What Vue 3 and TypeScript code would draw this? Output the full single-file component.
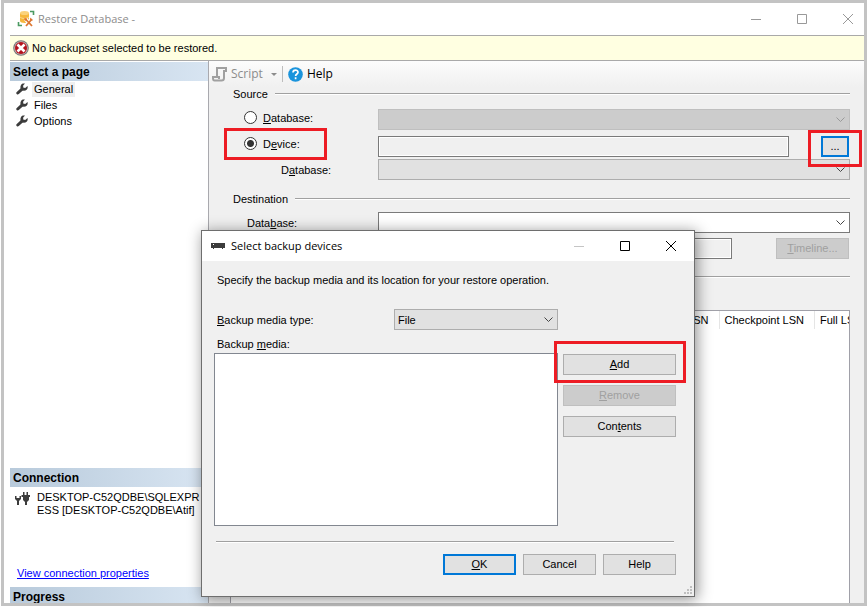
<script setup lang="ts">
import { ref } from 'vue'

interface Page { name: string; href: string }
const pages: Page[] = [
  { name: 'General', href: '#general' },
  { name: 'Files', href: '#files' },
  { name: 'Options', href: '#options' },
]
const current = ref('General')
const source = ref('device')
const mediaType = ref('File')
const columns: string[] = ['LSN', 'Checkpoint LSN', 'Full LSN']
</script>

<template>
  <div class="screen">
    <main class="window">
      <header class="titlebar">
        <svg class="app-icon" viewBox="0 0 18 18" width="18" height="18" aria-hidden="true">
          <path d="M3 3v8c0 2.500 9 2.500 9 0V3z" fill="#f6b73c" />
          <ellipse cx="7.500" cy="3" rx="4.500" ry="2" fill="#fbd27a" />
          <path d="M3 7c2 2 7 2 9 0" fill="none" stroke="#fbd98f" />
          <path d="M13 1.500h3.500V5M1.500 12v3.500H5" fill="none" stroke="#4b9a62" stroke-width="1.600" />
          <path d="M8.500 9l6.500 7M15 9l-6 7" stroke="#fff" stroke-width="4" />
          <path d="M8.500 9l6.500 7M15 9l-6 7" stroke="#dd7630" stroke-width="1.800" />
          <path d="M7 8.500L9.500 8l.5 2-2 1zM13 7.500v3h3" fill="#dd7630" />
        </svg>
        <h1>Restore Database -</h1>
        <div class="caption">
          <button type="button" aria-label="Minimize"><svg width="12" height="12" viewBox="0 0 12 12"><path d="M1 6.500h10" /></svg></button>
          <button type="button" aria-label="Maximize"><svg width="12" height="12" viewBox="0 0 12 12"><path d="M1.500 1.500h9v9h-9z" /></svg></button>
          <button type="button" aria-label="Close"><svg width="12" height="12" viewBox="0 0 12 12"><path d="M1 1l10 10M11 1L1 11" /></svg></button>
        </div>
      </header>
      <div class="notice" role="alert">
        <svg width="16" height="16" viewBox="0 0 16 16" aria-hidden="true">
          <circle cx="8" cy="8" r="7.800" fill="#777" />
          <circle cx="8" cy="8" r="6.800" fill="#c9b5b5" />
          <circle cx="8" cy="8" r="6" fill="#b5121b" />
          <path d="M4.500 4.500l7 7M11.500 4.500l-7 7" stroke="#fff" stroke-width="2.600" />
        </svg>
        <span>No backupset selected to be restored.</span>
      </div>
      <div class="body">
        <aside>
          <h2>Select a page</h2>
          <nav>
            <a v-for="p in pages" :key="p.name" :href="p.href" :class="{ active: p.name === current }" @click.prevent="current = p.name">
              <svg width="12" height="12" viewBox="0 0 12 12" aria-hidden="true">
                <path d="M1.800 10L6 6.200" stroke="#3c3c3c" stroke-width="3" stroke-linecap="round" />
                <path d="M9 .5L7.200 2.500v2l2 .5L11.500 3c.8 2.400-1 4.800-3.500 4.800S3.800 5.600 4.600 3 7 .2 9 .5z" fill="#3c3c3c" />
              </svg>
              <span>{{ p.name }}</span>
            </a>
          </nav>
          <h2>Connection</h2>
          <div class="connection">
            <svg width="15" height="15" viewBox="0 0 15 15" aria-hidden="true">
              <path d="M0 5v3l2 2v4h2v-4l2-2V5H4.500v2h-3V5zM8 1h1.500v3h2V1H13v3h2v2h-1v3l-2 2v3h-2v-3L8 9V6H6.500V4H8z" fill="#3c3c3c" />
            </svg>
            <p>DESKTOP-C52QDBE\SQLEXPR<br />ESS [DESKTOP-C52QDBE\Atif]</p>
          </div>
          <a class="props" href="#connection">View connection properties</a>
          <h2>Progress</h2>
        </aside>
        <section class="pane">
          <div class="toolbar">
            <button type="button" class="script" disabled>
              <svg width="16" height="16" viewBox="0 0 16 16" aria-hidden="true">
                <path d="M5 11V2h9v3h-2v7c0 2-1 2.500-2.500 2.500H2.500C1.500 14.500 1 13.500 1 12v-1h6v2" fill="none" stroke="#a0a0a0" stroke-width="2" />
              </svg>
              <span>Script</span>
              <svg class="caret" width="6" height="3" viewBox="0 0 6 3" aria-hidden="true"><path d="M0 0h6L3 3z" fill="#8c8c8c" /></svg>
            </button>
            <button type="button" class="help">
              <svg width="15" height="15" viewBox="0 0 15 15" aria-hidden="true">
                <circle cx="7.500" cy="7.500" r="7.300" fill="#1a94dc" />
                <path d="M5 5.600c0-3.200 5-3.200 5-.3 0 1.700-2.400 1.700-2.400 3.700M7.600 10.200v2" fill="none" stroke="#fff" stroke-width="1.700" />
              </svg>
              <span>Help</span>
            </button>
          </div>
          <form class="form" @submit.prevent>
            <h3>Source</h3>
            <div class="row first">
              <label class="radio"><input v-model="source" type="radio" name="source" value="database" /><span><u>D</u>atabase:</span></label>
              <select class="grow" disabled aria-label="Source database"></select>
            </div>
            <div class="row device">
              <label class="radio marked"><input v-model="source" type="radio" name="source" value="device" /><span>D<u>e</u>vice:</span></label>
              <input class="grow" type="text" readonly aria-label="Device" />
              <span class="browse-box"><button type="button" class="btn primary">...</button></span>
            </div>
            <div class="row sub">
              <label for="device-db">D<u>a</u>tabase:</label>
              <select id="device-db" class="grow"></select>
            </div>
            <h3 class="dest">Destination</h3>
            <div class="row target">
              <label for="target-db">Data<u>b</u>ase:</label>
              <select id="target-db" class="grow white"></select>
            </div>
            <div class="row restore">
              <input class="grow" type="text" readonly aria-label="Restore to" />
              <button type="button" class="btn" disabled><u>T</u>imeline...</button>
            </div>
            <div class="rule"></div>
            <div class="sets">
              <table>
                <thead><tr><th v-for="c in columns" :key="c">{{ c }}</th></tr></thead>
              </table>
            </div>
          </form>
        </section>
      </div>
    </main>

    <div class="dialog" role="dialog" aria-labelledby="dialog-title">
      <header>
        <svg width="14" height="6" viewBox="0 0 14 6" aria-hidden="true"><path d="M0 0h14v5h-2v1h-1V5H3v1H2V5H0z" fill="#3c3c3c" /><path d="M2 1.500h1" stroke="#fff" /></svg>
        <h1 id="dialog-title">Select backup devices</h1>
        <div class="caption">
          <button type="button" disabled aria-label="Minimize"><svg width="12" height="12" viewBox="0 0 12 12"><path d="M1 6.500h10" /></svg></button>
          <button type="button" aria-label="Maximize"><svg width="12" height="12" viewBox="0 0 12 12"><path d="M1.500 1.500h9v9h-9z" /></svg></button>
          <button type="button" aria-label="Close"><svg width="12" height="12" viewBox="0 0 12 12"><path d="M1 1l10 10M11 1L1 11" /></svg></button>
        </div>
      </header>
      <div class="content">
        <p>Specify the backup media and its location for your restore operation.</p>
        <div class="type">
          <label for="media-type"><u>B</u>ackup media type:</label>
          <select id="media-type" v-model="mediaType"><option>File</option><option>URL</option></select>
        </div>
        <label class="media-label" for="media">Backup <u>m</u>edia:</label>
        <div class="media">
          <select id="media" size="8"></select>
          <div class="actions">
            <span class="add-box"><button type="button" class="btn"><u>A</u>dd</button></span>
            <button type="button" class="btn" disabled><u>R</u>emove</button>
            <button type="button" class="btn">Con<u>t</u>ents</button>
          </div>
        </div>
        <div class="rule"></div>
        <footer>
          <button type="button" class="btn primary"><u>O</u>K</button>
          <button type="button" class="btn">Cancel</button>
          <button type="button" class="btn">Help</button>
        </footer>
      </div>
      <svg class="grip" width="8" height="8" viewBox="0 0 8 8" aria-hidden="true"><path d="M6 0h2v2H6zM3 3h2v2H3zM6 3h2v2H6zM0 6h2v2H0zM3 6h2v2H3zM6 6h2v2H6z" fill="#bfbfbf" /></svg>
    </div>
  </div>
</template>

<style>
body { background: #fff; overflow: hidden; }
</style>

<style scoped>
* { box-sizing: border-box; }
.screen {
  position: relative;
  height: 100vh;
  padding: 0 1px 1px;
  font: 11px/16px "Liberation Sans", sans-serif;
  color: #000;
}
h1, h2, h3, p { margin: 0; font-size: inherit; font-weight: normal; }
button, select, input { font: inherit; color: inherit; margin: 0; }
select { appearance: none; border-radius: 0; outline: none; }
.window {
  height: 100%;
  display: flex;
  flex-direction: column;
  border: 3px solid #c3c3c3;
  padding-left: 6px;
  overflow: hidden;
}
.titlebar { flex: none; display: flex; align-items: center; height: 32px; padding: 0 10px 0 7px; }
h1 { font: 11px/16px "Open Sans", sans-serif; }
.titlebar h1 { margin-left: 3px; color: #8c8c8c; flex: 1; }
.caption { display: flex; gap: 34px; }
.caption button { display: flex; padding: 0; border: 0; background: none; }
.caption path { fill: none; stroke: #999; }
.notice {
  flex: none;
  display: flex;
  align-items: center;
  gap: 3px;
  height: 26px;
  padding-left: 3px;
  background: #ffffe1;
  border: solid #a9a9a9;
  border-width: 1px 0;
}
.body { flex: 1; min-height: 0; display: flex; }
aside {
  flex: none;
  width: 199px;
  display: flex;
  flex-direction: column;
  margin-bottom: -3px;
  padding-top: 1px;
  border-right: 1px solid #a9a9ae;
  overflow: hidden;
}
h2 {
  flex: none;
  height: 19px;
  padding-left: 3px;
  background: linear-gradient(90deg, #b8cadb, #d8e5f2);
  font: bold 12px/20px "Liberation Sans", sans-serif;
}
nav { flex: 1; }
nav a { display: flex; align-items: center; gap: 4px; height: 16px; padding-left: 6px; color: #000; text-decoration: none; }
nav span { padding: 0 2px; line-height: 15px; }
nav .active span { background: #efefef; }
.connection { display: flex; gap: 7px; height: 78px; padding: 4px 0 0 5px; }
.connection p { line-height: 13px; white-space: nowrap; }
.props { height: 22px; padding-left: 7px; color: #0000ff; }
.pane {
  flex: 1;
  min-width: 0;
  display: flex;
  flex-direction: column;
  background: #f0f0f0;
}
.toolbar { flex: none; display: flex; height: 26px; align-items: center; background: linear-gradient(#fcfcfc, #f0f0f0); padding-left: 3px; }
.toolbar button { display: flex; align-items: center; height: 16px; padding: 0; border: 0; background: none; font: 12px/16px "Open Sans", sans-serif; }
.toolbar .script { gap: 3px; padding-right: 5px; border-right: 1px solid #bdbdbd; color: #8c8c8c; }
.caret { margin-left: 5px; }
.toolbar .help { gap: 4px; padding-left: 5px; }
.form { flex: 1; min-height: 0; display: flex; flex-direction: column; padding: 0 14px 0 24px; }
h3 { display: flex; align-items: center; gap: 7px; height: 14px; }
h3::after { content: ""; flex: 1; height: 1px; background: #a0a0a0; border-bottom: 1px solid #fff; }
.row { display: flex; align-items: center; height: 21px; }
.row > label { flex: none; width: 145px; }
.first { margin-top: 8px; }
.grow { flex: 1; min-width: 0; height: 21px; border: 1px solid #adadad; }
.row select, .type select {
  background: #e1e1e1 url("data:image/svg+xml,%3Csvg xmlns='http://www.w3.org/2000/svg' width='9' height='5'%3E%3Cpath d='M.5 .5l4 4 4-4' fill='none' stroke='%23444'/%3E%3C/svg%3E") no-repeat right 4px center;
}
.row select:disabled {
  background-color: #ccc;
  background-image: url("data:image/svg+xml,%3Csvg xmlns='http://www.w3.org/2000/svg' width='9' height='5'%3E%3Cpath d='M.5 .5l4 4 4-4' fill='none' stroke='%23999'/%3E%3C/svg%3E");
  border-color: #bfbfbf;
  opacity: 1;
}
.row .white { background-color: #fff; border-color: #7a7a7a; }
.row input[type="text"] { background: #f0f0f0; border: 1px solid #7a7a7a; box-shadow: inset 0 0 0 1px #fff; outline: none; }
.radio { display: flex; align-items: center; gap: 6px; padding: 0 0 4px 11px; }
.radio input { appearance: none; width: 13px; height: 13px; border: 1px solid #333; border-radius: 50%; background: #fff; }
.radio input:checked { background: radial-gradient(circle, #333 0 3px, #fff 4px); }
.device { margin-top: 6px; }
.marked { position: relative; padding-bottom: 6px; }
.marked::after { content: ""; position: absolute; inset: -8px 51px -2px -9px; border: 3px solid #ed1c24; }
.browse-box { position: relative; z-index: 1; flex: none; margin-left: 32px; display: flex; }
.browse-box::after, .add-box::after { content: ""; position: absolute; border: 3px solid #ed1c24; pointer-events: none; }
.browse-box::after { inset: -6px -12px -10px -13px; }
.browse-box .btn { width: 28px; margin-right: 1px; }
.sub { margin-top: 2px; }
.sub label { padding-left: 48px; }
.dest { margin-top: 12px; }
.target { margin-top: 6px; }
.target label { padding-left: 14px; }
.restore { margin-top: 5px; padding-left: 145px; gap: 44px; }
.restore .btn { width: 73px; margin-right: 1px; }
.rule { height: 2px; background: #a0a0a0; border-bottom: 1px solid #fff; }
.form > .rule { flex: none; margin-top: 17px; }
.sets { flex: 1; margin: 32px 0 0 -3px; border: 1px solid #a0a0a8; border-bottom: 0; background: #fff; overflow: hidden; display: flex; justify-content: flex-end; }
table { flex: none; border-spacing: 0; height: 18px; margin-right: -26px; }
th { padding: 0 10px 0 5px; border-right: 1px solid #e5e5e5; font-weight: normal; text-align: left; white-space: nowrap; }
th:nth-child(2) { min-width: 94px; }
th:nth-child(3) { min-width: 60px; }
.btn { height: 21px; padding: 0; border: 1px solid #adadad; background: #e1e1e1; line-height: 17px; text-align: center; }
.btn.primary { border: 2px solid #0078d7; }
.btn:disabled { border-color: #bfbfbf; background: #ccc; color: #a0a0a0; }
.dialog {
  position: absolute;
  z-index: 2;
  left: 201px;
  top: 230px;
  width: 494px;
  background: #f0f0f0;
  border: 1px solid #6e6e6e;
  box-shadow: 2px 2px 14px rgba(0, 0, 0, .45);
}
.dialog header { display: flex; align-items: center; height: 30px; padding: 0 17px 0 9px; background: #fff; }
.dialog h1 { flex: 1; margin-left: 6px; }
.dialog .caption path { stroke: #000; }
.dialog .caption button:disabled path { stroke: #c5c5c5; }
.content { padding: 11px 18px 21px 12px; }
.content p, .type label, .media-label { padding-left: 3px; }
.type { display: flex; align-items: center; margin-top: 21px; }
.type label { width: 180px; }
.type select { width: 164px; height: 21px; padding: 0 3px; border: 1px solid #adadad; }
.media-label { display: block; margin: 6px 0 1px; }
.media { display: flex; gap: 5px; }
.media > select { width: 344px; height: 173px; border: 1px solid #828790; background: #fff; }
.actions { flex: 1; display: flex; flex-direction: column; gap: 10px; padding-top: 1px; }
.add-box { position: relative; display: grid; }
.add-box::after { inset: -13px -10px -8px -9px; }
.content > .rule { margin: 15px 2px 0; }
footer { display: flex; justify-content: flex-end; gap: 7px; margin-top: 11px; }
footer .btn { width: 73px; }
.grip { position: absolute; right: 2px; bottom: 2px; }
</style>
